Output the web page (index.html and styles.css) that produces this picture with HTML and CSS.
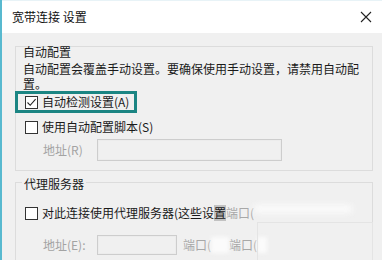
FILE: index.html
```html
<!DOCTYPE html>
<html lang="zh-CN">
<head>
<meta charset="UTF-8">
<title>宽带连接 设置</title>
<link rel="stylesheet" href="styles.css">
</head>
<body>
<div class="window">
    <div class="titlebar">
        <span class="title">宽带连接 设置</span>
        <svg class="close" width="12" height="12" viewBox="0 0 12 12">
            <path d="M1 1 L11 11 M11 1 L1 11" stroke="#222" stroke-width="1.1" fill="none"/>
        </svg>
    </div>
    <div class="content">
        <div class="group auto">
            <div class="group-title">自动配置</div>
            <p class="desc">自动配置会覆盖手动设置。要确保使用手动设置，请禁用自动配<br>置。</p>
            <label class="check focused">
                <span class="box">
                    <svg width="11" height="11" viewBox="0 0 11 11"><path d="M1.5 5.5 L4.2 8.3 L9.6 2.2" stroke="#222" stroke-width="1.1" fill="none"/></svg>
                </span>
                自动检测设置(A)
            </label>
            <label class="check plain"><span class="box"></span>使用自动配置脚本(S)</label>
            <div class="field">
                <span class="field-label">地址(R)</span>
                <span class="input wide"></span>
            </div>
        </div>
        <div class="group proxy">
            <div class="group-title">代理服务器</div>
            <label class="check plain proxy-check">
                <span class="box"></span>对此连接使用代理服务器(这些设<span class="smudge">置</span><span class="ghost">端口(</span><span class="streak"></span>
            </label>
            <div class="field second">
                <span class="field-label">地址(E):</span>
                <span class="input narrow"></span>
                <span class="ghost">端口(</span><span class="blob"></span><span class="ghost">端口(</span><span class="blob small"></span>
                <span class="ghost-box"></span>
            </div>
        </div>
    </div>
</div>
</body>
</html>
```

FILE: styles.css
```css
body {
    margin: 0;
    background: #f0f0f0;
    font-family: "Noto Sans CJK SC", "Noto Sans", sans-serif;
    font-size: 12px;
    line-height: 16px;
    color: #1a1a1a;
}
.window {
    width: 382px;
    height: 260px;
    box-sizing: border-box;
    border-left: 2px solid #58b9cf;
    background: #f0f0f0;
    overflow: hidden;
}
.titlebar {
    height: 33px;
    background: #fff;
    display: flex;
    align-items: center;
    justify-content: space-between;
    padding: 0 10px;
    border-top: 1px solid #e8f3f7;
    box-sizing: border-box;
}
.title {
    line-height: 14px;
    color: #111;
}
.content {
    padding: 13px 9px 0 13px;
}
.group {
    border: 1px solid #dcdcdc;
    padding: 0 9px 9px 7px;
}
.group-title {
    height: 14px;
    line-height: 14px;
    margin-top: -2px;
}
.proxy .group-title {
    width: fit-content;
    background: #f0f0f0;
    margin: -6px 0 0 -1px;
    padding: 0 2px;
}
.desc {
    margin: 2px 0 0 0;
    line-height: 15px;
    white-space: nowrap;
}
.check {
    display: flex;
    align-items: center;
    height: 16px;
    line-height: 16px;
    white-space: nowrap;
}
.box {
    width: 13px;
    height: 13px;
    box-sizing: border-box;
    border: 1px solid #333;
    background: #fff;
    margin-right: 4px;
    display: flex;
    align-items: center;
    justify-content: center;
    flex: none;
}
.focused {
    width: 122px;
    height: 22px;
    box-sizing: border-box;
    border: 3px solid #1b8583;
    margin-left: -8px;
    padding-left: 7px;
}
.plain {
    margin: 6px 0 0 2px;
}
.field {
    display: flex;
    align-items: center;
    height: 22px;
    margin-top: 4px;
    color: #a3a3a3;
}
.field-label {
    width: 54px;
    margin-left: 20px;
    flex: none;
}
.input {
    height: 22px;
    box-sizing: border-box;
    border: 1px solid #cdcdcd;
    box-shadow: inset 0 0 0 1px #ececec;
    background: #f0f0f0;
    flex: none;
}
.wide {
    width: 185px;
}
.group.proxy {
    margin-top: 11px;
    height: 120px;
    padding-bottom: 0;
}
.proxy-check {
    margin-top: 14px;
}
.smudge {
    background: rgba(110, 110, 110, 0.35);
}
.streak {
    width: 98px;
    height: 8px;
    background: #fbfbfb;
    filter: blur(3px);
    margin-top: -8px;
}
.second {
    margin-top: 14px;
    height: 20px;
    position: relative;
}
.narrow {
    width: 80px;
    height: 20px;
    margin-right: 6px;
}
.ghost {
    color: #a8a8a8;
}
.blob {
    width: 18px;
    height: 16px;
    background: #fbfbfb;
    filter: blur(2px);
}
.blob.small {
    width: 10px;
}
.ghost-box {
    position: absolute;
    left: 234px;
    top: -13px;
    width: 116px;
    height: 40px;
    border: 1px solid #e4e4e4;
    box-sizing: border-box;
}
```
